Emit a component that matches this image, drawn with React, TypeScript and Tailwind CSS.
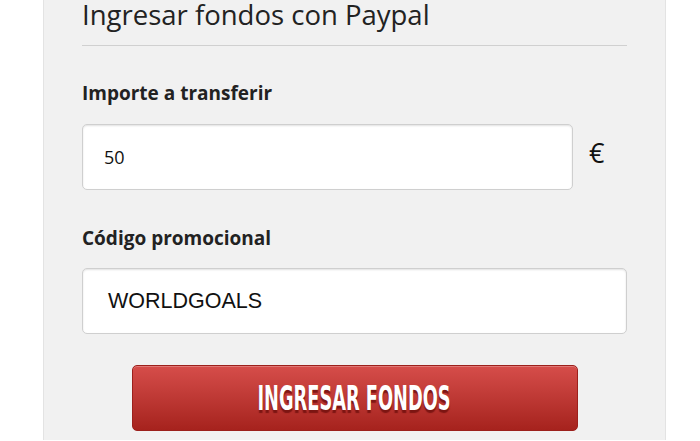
const App = () => {
  return (
    <div className="w-[700px] h-[441px] overflow-hidden bg-white pl-[43px]">
      <div className="w-[623px] h-full bg-[#f1f1f1] border-l border-r border-[#e3e3e3] px-[38px] font-['Open_Sans',sans-serif] text-[#222]">
        {/* Header */}
        <div className="-mt-[1px] pb-[14px] border-b border-[#d0d0d0]">
          <h2 className="text-[27.5px] leading-[32px] font-normal text-[#222]">Ingresar fondos con Paypal</h2>
        </div>

        {/* Amount */}
        <label className="block mt-[35px] text-[19px] leading-[24px] font-bold text-[#222]">
          Importe a transferir
        </label>
        <div className="mt-[19px] flex items-center gap-[16px]">
          <div className="w-[491px] h-[66px] bg-white border border-[#cfcfcf] rounded-[5px] shadow-[inset_0_1px_2px_rgba(0,0,0,0.12)] flex items-center pl-[21px]">
            <span className="text-[18px] text-[#111]">50</span>
          </div>
          <span className="text-[27px] leading-none -mt-[10px] text-[#111]">€</span>
        </div>

        {/* Promo code */}
        <label className="block mt-[36px] text-[19px] leading-[24px] font-bold text-[#222]">
          Código promocional
        </label>
        <div className="mt-[18px] h-[66px] bg-white border border-[#cfcfcf] rounded-[5px] shadow-[inset_0_1px_2px_rgba(0,0,0,0.12)] flex items-center pl-[25px]">
          <span className="font-['Liberation_Sans',Arial,sans-serif] text-[21.5px] text-[#111]">WORLDGOALS</span>
        </div>

        {/* Submit */}
        <div className="mt-[31px] flex justify-center">
          <button className="w-[446px] h-[66px] rounded-[5px] border border-[#9c201c] bg-gradient-to-b from-[#d64d4a] to-[#a6221d] shadow-[inset_0_1px_0_rgba(255,255,255,0.25)] flex items-center justify-center">
            <span className="inline-block scale-x-[0.76] scale-y-[1.33] font-['Liberation_Sans_Narrow','DejaVu_Sans_Condensed',sans-serif] font-bold text-[26px] leading-none text-white [text-shadow:0_2px_1px_rgba(110,15,12,0.8)]">
              INGRESAR FONDOS
            </span>
          </button>
        </div>
      </div>
    </div>
  );
};

export default App;
